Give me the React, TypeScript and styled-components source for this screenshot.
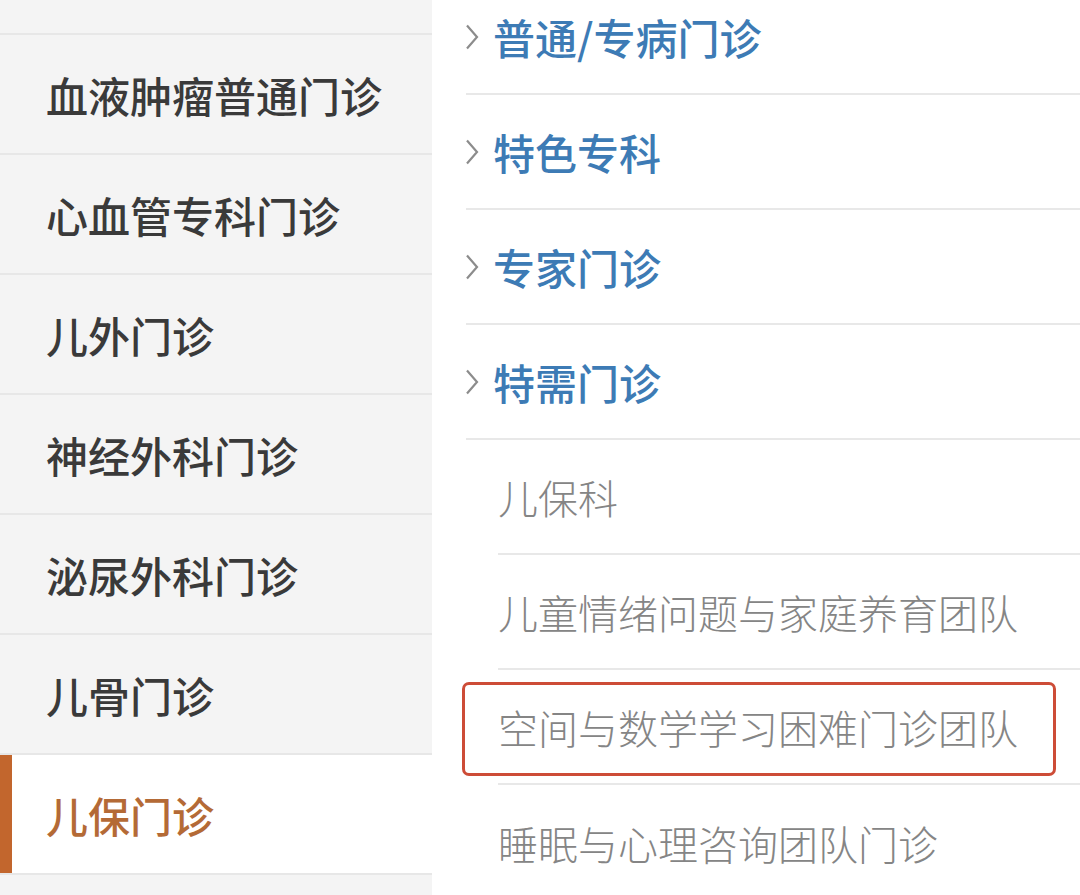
import React from 'react';
import styled, { createGlobalStyle } from 'styled-components';

const GlobalStyle = createGlobalStyle`
  html, body {
    margin: 0;
    padding: 0;
    background: #ffffff;
    overflow: hidden;
  }
  * { box-sizing: border-box; }
`;

const Page = styled.div`
  display: flex;
  width: 1080px;
  height: 895px;
  overflow: hidden;
  font-family: "Noto Sans CJK SC", "Noto Sans", sans-serif;
`;

const Sidebar = styled.nav`
  flex: 0 0 432px;
  display: flex;
  flex-direction: column;
  background: #f4f4f4;
`;

const SideSpacer = styled.div<{ $h: number }>`
  flex: 0 0 ${p => p.$h}px;
  border-bottom: ${p => (p.$h > 30 ? '2px solid #e7e7e7' : 'none')};
`;

const SideItem = styled.div<{ $active?: boolean }>`
  position: relative;
  flex: 0 0 120px;
  display: flex;
  align-items: center;
  padding-left: 46px;
  border-bottom: 2px solid #e7e7e7;
  background: ${p => (p.$active ? '#ffffff' : 'transparent')};
  color: ${p => (p.$active ? '#b46a36' : '#3a3a3a')};
  font-size: 42px;
  font-weight: 500;
  white-space: nowrap;

  &::before {
    content: '';
    display: ${p => (p.$active ? 'block' : 'none')};
    position: absolute;
    left: 0;
    top: 0;
    bottom: 0;
    width: 12px;
    background: #c2662d;
  }
`;

const Content = styled.section`
  flex: 1;
  display: flex;
  flex-direction: column;
  margin-top: -20px;
  padding-left: 34px;
`;

const Category = styled.div`
  flex: 0 0 115px;
  display: flex;
  align-items: center;
  gap: 14px;
  border-bottom: 2px solid #e8e8e8;
  color: #3d7bb5;
  font-size: 42px;
  font-weight: 500;
  white-space: nowrap;
`;

const Chevron = styled.svg`
  flex: 0 0 auto;
  width: 14px;
  height: 26px;
  margin-left: -1px;
`;

const SubItem = styled.div<{ $last?: boolean }>`
  position: relative;
  flex: 0 0 115px;
  display: flex;
  align-items: center;
  margin-left: 32px;
  border-bottom: ${p => (p.$last ? 'none' : '2px solid #e8e8e8')};
  color: #858585;
  font-size: 40px;
  font-weight: 300;
  white-space: nowrap;
`;

const Highlight = styled.span`
  position: absolute;
  left: -36px;
  right: 24px;
  top: 12px;
  height: 94px;
  border: 3px solid #cd4c37;
  border-radius: 7px;
  pointer-events: none;
`;

const sideItems = [
  '血液肿瘤普通门诊',
  '心血管专科门诊',
  '儿外门诊',
  '神经外科门诊',
  '泌尿外科门诊',
  '儿骨门诊',
  '儿保门诊',
];

const categories = ['普通/专病门诊', '特色专科', '专家门诊', '特需门诊'];

const subItems = [
  { label: '儿保科' },
  { label: '儿童情绪问题与家庭养育团队' },
  { label: '空间与数学学习困难门诊团队', marked: true },
  { label: '睡眠与心理咨询团队门诊' },
];

function ChevronIcon() {
  return (
    <Chevron viewBox="0 0 14 26" fill="none">
      <polyline points="2,1.5 12,13 2,24.5" stroke="#8c8c8c" strokeWidth="2.2" strokeLinejoin="miter" />
    </Chevron>
  );
}

export default function App() {
  return (
    <>
      <GlobalStyle />
      <Page>
        <Sidebar>
          <SideSpacer $h={35} />
          {sideItems.map(name => (
            <SideItem key={name} $active={name === '儿保门诊'}>
              {name}
            </SideItem>
          ))}
          <SideSpacer $h={20} />
        </Sidebar>
        <Content>
          {categories.map(c => (
            <Category key={c}>
              <ChevronIcon />
              {c}
            </Category>
          ))}
          {subItems.map((s, i) => (
            <SubItem key={s.label} $last={i === subItems.length - 1}>
              {s.marked && <Highlight />}
              {s.label}
            </SubItem>
          ))}
        </Content>
      </Page>
    </>
  );
}
